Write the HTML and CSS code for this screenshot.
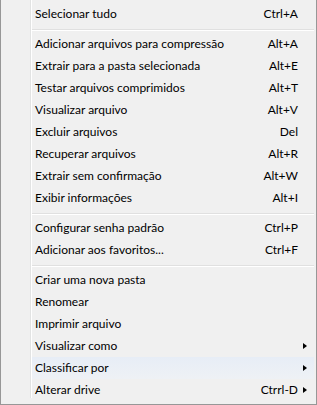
FILE: index.html
```html
<!DOCTYPE html>
<html lang="pt">
<head>
    <meta charset="UTF-8">
    <title>Menu</title>
    <link rel="stylesheet" href="styles.css">
</head>
<body>
    <div class="menu">
        <ul class="list">
            <li class="item"><span class="label">Selecionar tudo</span><span class="key">Ctrl+A</span><span class="arrow"></span></li>
            <li class="sep"></li>
            <li class="item"><span class="label">Adicionar arquivos para compressão</span><span class="key">Alt+A</span><span class="arrow"></span></li>
            <li class="item"><span class="label">Extrair para a pasta selecionada</span><span class="key">Alt+E</span><span class="arrow"></span></li>
            <li class="item"><span class="label">Testar arquivos comprimidos</span><span class="key">Alt+T</span><span class="arrow"></span></li>
            <li class="item"><span class="label">Visualizar arquivo</span><span class="key">Alt+V</span><span class="arrow"></span></li>
            <li class="item"><span class="label">Excluir arquivos</span><span class="key">Del</span><span class="arrow"></span></li>
            <li class="item"><span class="label">Recuperar arquivos</span><span class="key">Alt+R</span><span class="arrow"></span></li>
            <li class="item"><span class="label">Extrair sem confirmação</span><span class="key">Alt+W</span><span class="arrow"></span></li>
            <li class="item"><span class="label">Exibir informações</span><span class="key">Alt+I</span><span class="arrow"></span></li>
            <li class="sep"></li>
            <li class="item"><span class="label">Configurar senha padrão</span><span class="key">Ctrl+P</span><span class="arrow"></span></li>
            <li class="item"><span class="label">Adicionar aos favoritos...</span><span class="key">Ctrl+F</span><span class="arrow"></span></li>
            <li class="sep"></li>
            <li class="item"><span class="label">Criar uma nova pasta</span><span class="key"></span><span class="arrow"></span></li>
            <li class="item"><span class="label">Renomear</span><span class="key"></span><span class="arrow"></span></li>
            <li class="item"><span class="label">Imprimir arquivo</span><span class="key"></span><span class="arrow"></span></li>
            <li class="item"><span class="label">Visualizar como</span><span class="key"></span><span class="arrow sub"></span></li>
            <li class="item hover"><span class="label">Classificar por</span><span class="key"></span><span class="arrow sub"></span></li>
            <li class="item"><span class="label">Alterar drive</span><span class="key">Ctrrl-D</span><span class="arrow sub"></span></li>
        </ul>
    </div>
</body>
</html>
```

FILE: styles.css
```css
html, body {
    margin: 0;
    padding: 0;
    background: #f0f0f0;
}
.menu {
    width: 317px;
    height: 405px;
    box-sizing: border-box;
    border: 1px solid #979797;
    border-top: none;
    padding: 3px 0 3px 0;
    background-color: #f0f0f0;
    /* gutter line next to the icon column */
    background-image: linear-gradient(to right, transparent 29px, #e2e3e3 29px, #e2e3e3 30px, #fff 30px, #fff 31px, transparent 31px);
    background-repeat: no-repeat;
    background-size: 100% 398px;
    font-family: Lato, "Noto Sans", sans-serif;
    font-size: 12px;
    color: #000;
}
.list {
    list-style: none;
    margin: 0;
    padding: 0;
}
.item {
    display: flex;
    align-items: center;
    height: 22px;
    box-sizing: border-box;
    padding-bottom: 2px;
    margin-left: 2px;
    margin-right: 2px;
    padding-left: 32px;
}
.item.hover {
    margin-left: 31px;
    padding-left: 3px;
    background: linear-gradient(#e7edf6, #eef1f5);
}
.label {
    flex: 1;
    white-space: nowrap;
}
.key {
    white-space: nowrap;
}
.arrow {
    width: 16px;
    height: 7px;
    flex: none;
}
.arrow.sub::before {
    content: "";
    display: block;
    margin-left: 5px;
    margin-top: 1px;
    width: 0;
    height: 0;
    border-top: 3.5px solid transparent;
    border-bottom: 3.5px solid transparent;
    border-left: 4px solid #000;
}
.sep {
    height: 8px;
    margin-left: 31px;
    margin-right: 2px;
    box-sizing: border-box;
    padding-top: 4px;
}
.sep::before {
    content: "";
    display: block;
    height: 1px;
    background: #e0e0e0;
    border-bottom: 1px solid #fff;
}
```
